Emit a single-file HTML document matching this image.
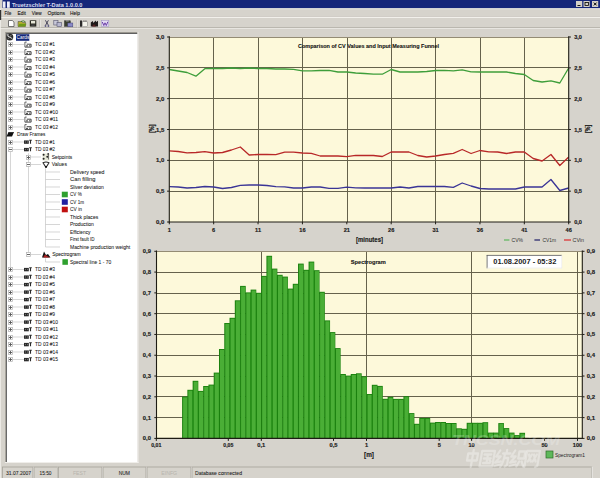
<!DOCTYPE html>
<html><head><meta charset="utf-8"><title>T-Data</title>
<style>
html,body{margin:0;padding:0;width:600px;height:478px;overflow:hidden;background:#D6D3CC;}
svg{display:block;}
text{font-family:"Liberation Sans", sans-serif;}
</style></head><body>
<svg width="600" height="478" viewBox="0 0 600 478">
<rect x="0" y="0" width="600" height="478" fill="#D6D3CC"/>

<rect x="2.5" y="0" width="597.5" height="8.3" fill="#15267A"/>
<rect x="3" y="1.5" width="2.5" height="6.3" fill="#F0F0F8"/><rect x="7" y="1.5" width="2.8" height="6.3" fill="#F0F0F8"/>
<text x="12.00" y="6.66" font-size="6" fill="#D8DCF0" textLength="70.50" lengthAdjust="spacingAndGlyphs" font-weight="bold">Truetzschler T-Data 1.0.0.0</text>
<rect x="576" y="1" width="6.2" height="6" fill="#D4D0C8"/>
<rect x="583.5" y="1" width="6.2" height="6" fill="#D4D0C8"/>
<rect x="592" y="1" width="6.2" height="6" fill="#D4D0C8"/>
<rect x="577.5" y="5" width="3" height="0.9" fill="#000"/>
<rect x="585" y="2.5" width="3.5" height="3" fill="none" stroke="#000" stroke-width="0.8"/>
<path d="M593.8 2.6 L596.6 5.4 M596.6 2.6 L593.8 5.4" stroke="#000" stroke-width="1"/>
<rect x="0" y="8.3" width="600" height="0.9" fill="#ECEAE4"/>
<text x="4.50" y="15.36" font-size="6" fill="#111" textLength="6.80" lengthAdjust="spacingAndGlyphs" stroke="#111" stroke-width="0.1">File</text>
<text x="17.50" y="15.36" font-size="6" fill="#111" textLength="8.30" lengthAdjust="spacingAndGlyphs" stroke="#111" stroke-width="0.1">Edit</text>
<text x="31.70" y="15.36" font-size="6" fill="#111" textLength="10.00" lengthAdjust="spacingAndGlyphs" stroke="#111" stroke-width="0.1">View</text>
<text x="47.50" y="15.36" font-size="6" fill="#111" textLength="17.50" lengthAdjust="spacingAndGlyphs" stroke="#111" stroke-width="0.1">Options</text>
<text x="70.00" y="15.36" font-size="6" fill="#111" textLength="10.00" lengthAdjust="spacingAndGlyphs" stroke="#111" stroke-width="0.1">Help</text>
<rect x="0" y="16.3" width="600" height="0.7" fill="#CFCBC4"/>
<rect x="0" y="17" width="600" height="1" fill="#F2F0EB"/>
<rect x="0" y="27.4" width="600" height="0.8" fill="#A8A49C"/>
<rect x="0" y="28.2" width="600" height="0.7" fill="#F4F2EE"/>
<path d="M8.5 20.5 H12.3 L14 22.2 V26.5 H8.5 Z" fill="#fff" stroke="#444" stroke-width="0.7"/>
<path d="M18 21.5 H21.5 L22.5 22.5 H25.5 V26.5 H18 Z" fill="#B8B030" stroke="#444" stroke-width="0.5"/><path d="M19.5 23.8 H26.5 L25 26.5 H18 Z" fill="#6E9A18"/><path d="M21 21.5 Q23.5 20 25.5 21.8" stroke="#2a6a10" stroke-width="0.8" fill="none"/>
<rect x="29.8" y="20.3" width="6.5" height="6.3" fill="#2a2a20"/><rect x="31" y="21" width="4.2" height="2.5" fill="#E8E8D8"/><rect x="31.3" y="24.3" width="3.5" height="1.8" fill="#444"/>
<rect x="39.5" y="19.5" width="0.6" height="8" fill="#A8A49C"/><rect x="40.1" y="19.5" width="0.6" height="8" fill="#F4F2EE"/>
<path d="M45.4 20.3 L48.4 25.2 M48.4 20.3 L45.6 25.2" stroke="#3a3850" stroke-width="0.9"/><circle cx="45.5" cy="26" r="0.9" fill="#5a5880"/><circle cx="48.4" cy="26" r="0.9" fill="#5a5880"/>
<rect x="53.8" y="20.5" width="4.2" height="4.5" fill="#c8c8d8" stroke="#555570" stroke-width="0.6"/><rect x="57" y="22.5" width="4.5" height="4" fill="#b8b8d0" stroke="#555570" stroke-width="0.6"/>
<rect x="64.5" y="20.8" width="5.8" height="5.5" fill="#3a4030" stroke="#2a2a2a" stroke-width="0.5"/><rect x="66" y="20.3" width="2.8" height="1.2" fill="#999"/><rect x="67.8" y="23" width="5" height="3.8" fill="#8a8ac8" stroke="#44447a" stroke-width="0.5"/>
<rect x="76.8" y="19.5" width="0.6" height="8" fill="#A8A49C"/><rect x="77.4" y="19.5" width="0.6" height="8" fill="#F4F2EE"/>
<rect x="80" y="20.5" width="2" height="6.2" fill="#2a2a2a"/><rect x="82.3" y="21.8" width="5" height="4.9" fill="#F4F4EC" stroke="#666" stroke-width="0.4"/><rect x="83.5" y="20.5" width="0.9" height="0.9" fill="#333"/><rect x="85.5" y="20.5" width="0.9" height="0.9" fill="#333"/>
<path d="M90.8 26.6 V22.5 L92.8 21 L93.5 23 L95.5 20.5 L96.2 22 L98 20.8 V26.6 Z" fill="#1e1a1a"/><path d="M92 26.6 L94 24 L96 26.6 Z" fill="#5a2020"/>
<rect x="101.3" y="20.3" width="7.5" height="6.4" fill="#E4DCF4" stroke="#9a90c0" stroke-width="0.5"/><path d="M102.3 22 L103.8 25.5 L105 22.8 L106.3 25.5 L107.8 21.8" stroke="#6030A0" stroke-width="0.9" fill="none"/>
<rect x="7" y="34" width="130.5" height="428" fill="#fff"/>
<rect x="6" y="33" width="131.5" height="1" fill="#606060"/>
<rect x="6" y="33" width="1" height="429" fill="#6a6a6a"/>
<rect x="5" y="32" width="132.5" height="1" fill="#9a978f"/>
<rect x="5" y="32" width="1" height="430" fill="#A8A59D"/>
<rect x="0" y="9" width="0.8" height="469" fill="#F2F0EC"/>
<rect x="0" y="10" width="1.2" height="10" fill="#333"/>
<rect x="137.5" y="32" width="1" height="431" fill="#F0EEEA"/>
<rect x="5" y="462" width="133.5" height="1" fill="#F0EEEA"/>
<circle cx="9.8" cy="37.1" r="3.5" fill="#2a2a2a"/><path d="M7.3 35.8 L12.3 38.6" stroke="#e8e8e8" stroke-width="0.9"/><path d="M8 38.8 L11.5 34.8" stroke="#aaa" stroke-width="0.7"/><circle cx="8" cy="35.0" r="0.8" fill="#ddd"/>
<rect x="16" y="34.2" width="13.3" height="6.6" fill="#14287A"/>
<text x="16.50" y="39.16" font-size="6.0" fill="#fff" textLength="12.80" lengthAdjust="spacingAndGlyphs">Cards</text>
<rect x="8.5" y="42.5" width="4" height="4" fill="#fff" stroke="#B0B0B0" stroke-width="0.7"/>
<line x1="9.0" y1="44.5" x2="12.0" y2="44.5" stroke="#555" stroke-width="0.9"/>
<line x1="10.5" y1="43.0" x2="10.5" y2="46.0" stroke="#555" stroke-width="0.9"/>
<line x1="12.5" y1="44.5" x2="24" y2="44.5" stroke="#C4C4C4" stroke-width="0.7"/>
<path d="M24.9 47.1 V42.1 H26.7" fill="none" stroke="#444" stroke-width="0.8"/>
<path d="M26.7 44.2 H31.1 V47.1 H24.9" fill="none" stroke="#333" stroke-width="0.9"/>
<rect x="26.0" y="45.3" width="2" height="1.2" fill="#555"/><rect x="29.1" y="45.0" width="1.4" height="1.6" fill="#777"/>
<text x="35.00" y="46.21" font-size="6.0" fill="#202020" textLength="20.00" lengthAdjust="spacingAndGlyphs" stroke="#202020" stroke-width="0.06">TC 03 #1</text>
<rect x="8.5" y="50.5" width="4" height="4" fill="#fff" stroke="#B0B0B0" stroke-width="0.7"/>
<line x1="9.0" y1="52.5" x2="12.0" y2="52.5" stroke="#555" stroke-width="0.9"/>
<line x1="10.5" y1="51.0" x2="10.5" y2="54.0" stroke="#555" stroke-width="0.9"/>
<line x1="12.5" y1="52.0" x2="24" y2="52.0" stroke="#C4C4C4" stroke-width="0.7"/>
<path d="M24.9 54.6 V49.6 H26.7" fill="none" stroke="#444" stroke-width="0.8"/>
<path d="M26.7 51.7 H31.1 V54.6 H24.9" fill="none" stroke="#333" stroke-width="0.9"/>
<rect x="26.0" y="52.8" width="2" height="1.2" fill="#555"/><rect x="29.1" y="52.5" width="1.4" height="1.6" fill="#777"/>
<text x="35.00" y="53.71" font-size="6.0" fill="#202020" textLength="20.00" lengthAdjust="spacingAndGlyphs" stroke="#202020" stroke-width="0.06">TC 03 #2</text>
<rect x="8.5" y="57.5" width="4" height="4" fill="#fff" stroke="#B0B0B0" stroke-width="0.7"/>
<line x1="9.0" y1="59.5" x2="12.0" y2="59.5" stroke="#555" stroke-width="0.9"/>
<line x1="10.5" y1="58.0" x2="10.5" y2="61.0" stroke="#555" stroke-width="0.9"/>
<line x1="12.5" y1="59.5" x2="24" y2="59.5" stroke="#C4C4C4" stroke-width="0.7"/>
<path d="M24.9 62.1 V57.1 H26.7" fill="none" stroke="#444" stroke-width="0.8"/>
<path d="M26.7 59.2 H31.1 V62.1 H24.9" fill="none" stroke="#333" stroke-width="0.9"/>
<rect x="26.0" y="60.3" width="2" height="1.2" fill="#555"/><rect x="29.1" y="60.0" width="1.4" height="1.6" fill="#777"/>
<text x="35.00" y="61.21" font-size="6.0" fill="#202020" textLength="20.00" lengthAdjust="spacingAndGlyphs" stroke="#202020" stroke-width="0.06">TC 03 #3</text>
<rect x="8.5" y="65.5" width="4" height="4" fill="#fff" stroke="#B0B0B0" stroke-width="0.7"/>
<line x1="9.0" y1="67.5" x2="12.0" y2="67.5" stroke="#555" stroke-width="0.9"/>
<line x1="10.5" y1="66.0" x2="10.5" y2="69.0" stroke="#555" stroke-width="0.9"/>
<line x1="12.5" y1="67.0" x2="24" y2="67.0" stroke="#C4C4C4" stroke-width="0.7"/>
<path d="M24.9 69.6 V64.6 H26.7" fill="none" stroke="#444" stroke-width="0.8"/>
<path d="M26.7 66.7 H31.1 V69.6 H24.9" fill="none" stroke="#333" stroke-width="0.9"/>
<rect x="26.0" y="67.8" width="2" height="1.2" fill="#555"/><rect x="29.1" y="67.5" width="1.4" height="1.6" fill="#777"/>
<text x="35.00" y="68.71" font-size="6.0" fill="#202020" textLength="20.00" lengthAdjust="spacingAndGlyphs" stroke="#202020" stroke-width="0.06">TC 03 #4</text>
<rect x="8.5" y="72.5" width="4" height="4" fill="#fff" stroke="#B0B0B0" stroke-width="0.7"/>
<line x1="9.0" y1="74.5" x2="12.0" y2="74.5" stroke="#555" stroke-width="0.9"/>
<line x1="10.5" y1="73.0" x2="10.5" y2="76.0" stroke="#555" stroke-width="0.9"/>
<line x1="12.5" y1="74.5" x2="24" y2="74.5" stroke="#C4C4C4" stroke-width="0.7"/>
<path d="M24.9 77.1 V72.1 H26.7" fill="none" stroke="#444" stroke-width="0.8"/>
<path d="M26.7 74.2 H31.1 V77.1 H24.9" fill="none" stroke="#333" stroke-width="0.9"/>
<rect x="26.0" y="75.3" width="2" height="1.2" fill="#555"/><rect x="29.1" y="75.0" width="1.4" height="1.6" fill="#777"/>
<text x="35.00" y="76.21" font-size="6.0" fill="#202020" textLength="20.00" lengthAdjust="spacingAndGlyphs" stroke="#202020" stroke-width="0.06">TC 03 #5</text>
<rect x="8.5" y="80.5" width="4" height="4" fill="#fff" stroke="#B0B0B0" stroke-width="0.7"/>
<line x1="9.0" y1="82.5" x2="12.0" y2="82.5" stroke="#555" stroke-width="0.9"/>
<line x1="10.5" y1="81.0" x2="10.5" y2="84.0" stroke="#555" stroke-width="0.9"/>
<line x1="12.5" y1="82.0" x2="24" y2="82.0" stroke="#C4C4C4" stroke-width="0.7"/>
<path d="M24.9 84.6 V79.6 H26.7" fill="none" stroke="#444" stroke-width="0.8"/>
<path d="M26.7 81.7 H31.1 V84.6 H24.9" fill="none" stroke="#333" stroke-width="0.9"/>
<rect x="26.0" y="82.8" width="2" height="1.2" fill="#555"/><rect x="29.1" y="82.5" width="1.4" height="1.6" fill="#777"/>
<text x="35.00" y="83.71" font-size="6.0" fill="#202020" textLength="20.00" lengthAdjust="spacingAndGlyphs" stroke="#202020" stroke-width="0.06">TC 03 #6</text>
<rect x="8.5" y="87.5" width="4" height="4" fill="#fff" stroke="#B0B0B0" stroke-width="0.7"/>
<line x1="9.0" y1="89.5" x2="12.0" y2="89.5" stroke="#555" stroke-width="0.9"/>
<line x1="10.5" y1="88.0" x2="10.5" y2="91.0" stroke="#555" stroke-width="0.9"/>
<line x1="12.5" y1="89.5" x2="24" y2="89.5" stroke="#C4C4C4" stroke-width="0.7"/>
<path d="M24.9 92.1 V87.1 H26.7" fill="none" stroke="#444" stroke-width="0.8"/>
<path d="M26.7 89.2 H31.1 V92.1 H24.9" fill="none" stroke="#333" stroke-width="0.9"/>
<rect x="26.0" y="90.3" width="2" height="1.2" fill="#555"/><rect x="29.1" y="90.0" width="1.4" height="1.6" fill="#777"/>
<text x="35.00" y="91.21" font-size="6.0" fill="#202020" textLength="20.00" lengthAdjust="spacingAndGlyphs" stroke="#202020" stroke-width="0.06">TC 03 #7</text>
<rect x="8.5" y="95.5" width="4" height="4" fill="#fff" stroke="#B0B0B0" stroke-width="0.7"/>
<line x1="9.0" y1="97.5" x2="12.0" y2="97.5" stroke="#555" stroke-width="0.9"/>
<line x1="10.5" y1="96.0" x2="10.5" y2="99.0" stroke="#555" stroke-width="0.9"/>
<line x1="12.5" y1="97.0" x2="24" y2="97.0" stroke="#C4C4C4" stroke-width="0.7"/>
<path d="M24.9 99.6 V94.6 H26.7" fill="none" stroke="#444" stroke-width="0.8"/>
<path d="M26.7 96.7 H31.1 V99.6 H24.9" fill="none" stroke="#333" stroke-width="0.9"/>
<rect x="26.0" y="97.8" width="2" height="1.2" fill="#555"/><rect x="29.1" y="97.5" width="1.4" height="1.6" fill="#777"/>
<text x="35.00" y="98.71" font-size="6.0" fill="#202020" textLength="20.00" lengthAdjust="spacingAndGlyphs" stroke="#202020" stroke-width="0.06">TC 03 #8</text>
<rect x="8.5" y="102.5" width="4" height="4" fill="#fff" stroke="#B0B0B0" stroke-width="0.7"/>
<line x1="9.0" y1="104.5" x2="12.0" y2="104.5" stroke="#555" stroke-width="0.9"/>
<line x1="10.5" y1="103.0" x2="10.5" y2="106.0" stroke="#555" stroke-width="0.9"/>
<line x1="12.5" y1="104.5" x2="24" y2="104.5" stroke="#C4C4C4" stroke-width="0.7"/>
<path d="M24.9 107.1 V102.1 H26.7" fill="none" stroke="#444" stroke-width="0.8"/>
<path d="M26.7 104.2 H31.1 V107.1 H24.9" fill="none" stroke="#333" stroke-width="0.9"/>
<rect x="26.0" y="105.3" width="2" height="1.2" fill="#555"/><rect x="29.1" y="105.0" width="1.4" height="1.6" fill="#777"/>
<text x="35.00" y="106.21" font-size="6.0" fill="#202020" textLength="20.00" lengthAdjust="spacingAndGlyphs" stroke="#202020" stroke-width="0.06">TC 03 #9</text>
<rect x="8.5" y="110.5" width="4" height="4" fill="#fff" stroke="#B0B0B0" stroke-width="0.7"/>
<line x1="9.0" y1="112.5" x2="12.0" y2="112.5" stroke="#555" stroke-width="0.9"/>
<line x1="10.5" y1="111.0" x2="10.5" y2="114.0" stroke="#555" stroke-width="0.9"/>
<line x1="12.5" y1="112.0" x2="24" y2="112.0" stroke="#C4C4C4" stroke-width="0.7"/>
<path d="M24.9 114.6 V109.6 H26.7" fill="none" stroke="#444" stroke-width="0.8"/>
<path d="M26.7 111.7 H31.1 V114.6 H24.9" fill="none" stroke="#333" stroke-width="0.9"/>
<rect x="26.0" y="112.8" width="2" height="1.2" fill="#555"/><rect x="29.1" y="112.5" width="1.4" height="1.6" fill="#777"/>
<text x="35.00" y="113.71" font-size="6.0" fill="#202020" textLength="23.00" lengthAdjust="spacingAndGlyphs" stroke="#202020" stroke-width="0.06">TC 03 #10</text>
<rect x="8.5" y="117.5" width="4" height="4" fill="#fff" stroke="#B0B0B0" stroke-width="0.7"/>
<line x1="9.0" y1="119.5" x2="12.0" y2="119.5" stroke="#555" stroke-width="0.9"/>
<line x1="10.5" y1="118.0" x2="10.5" y2="121.0" stroke="#555" stroke-width="0.9"/>
<line x1="12.5" y1="119.5" x2="24" y2="119.5" stroke="#C4C4C4" stroke-width="0.7"/>
<path d="M24.9 122.1 V117.1 H26.7" fill="none" stroke="#444" stroke-width="0.8"/>
<path d="M26.7 119.2 H31.1 V122.1 H24.9" fill="none" stroke="#333" stroke-width="0.9"/>
<rect x="26.0" y="120.3" width="2" height="1.2" fill="#555"/><rect x="29.1" y="120.0" width="1.4" height="1.6" fill="#777"/>
<text x="35.00" y="121.21" font-size="6.0" fill="#202020" textLength="23.00" lengthAdjust="spacingAndGlyphs" stroke="#202020" stroke-width="0.06">TC 03 #11</text>
<rect x="8.5" y="125.5" width="4" height="4" fill="#fff" stroke="#B0B0B0" stroke-width="0.7"/>
<line x1="9.0" y1="127.5" x2="12.0" y2="127.5" stroke="#555" stroke-width="0.9"/>
<line x1="10.5" y1="126.0" x2="10.5" y2="129.0" stroke="#555" stroke-width="0.9"/>
<line x1="12.5" y1="127.0" x2="24" y2="127.0" stroke="#C4C4C4" stroke-width="0.7"/>
<path d="M24.9 129.6 V124.6 H26.7" fill="none" stroke="#444" stroke-width="0.8"/>
<path d="M26.7 126.7 H31.1 V129.6 H24.9" fill="none" stroke="#333" stroke-width="0.9"/>
<rect x="26.0" y="127.8" width="2" height="1.2" fill="#555"/><rect x="29.1" y="127.5" width="1.4" height="1.6" fill="#777"/>
<text x="35.00" y="128.71" font-size="6.0" fill="#202020" textLength="23.00" lengthAdjust="spacingAndGlyphs" stroke="#202020" stroke-width="0.06">TC 03 #12</text>
<path d="M6.5 136.5 L8.5 132.0 H14 L12 136.5 Z" fill="#111"/><path d="M9 132.5 H13" stroke="#555" stroke-width="0.5"/>
<text x="17.00" y="136.21" font-size="6.0" fill="#202020" textLength="28.50" lengthAdjust="spacingAndGlyphs" stroke="#202020" stroke-width="0.06">Draw Frames</text>
<line x1="10.5" y1="151.75" x2="10.5" y2="267.25" stroke="#C4C4C4" stroke-width="0.7"/>
<rect x="8.5" y="140.5" width="4" height="4" fill="#fff" stroke="#B0B0B0" stroke-width="0.7"/>
<line x1="9.0" y1="142.5" x2="12.0" y2="142.5" stroke="#555" stroke-width="0.9"/>
<line x1="10.5" y1="141.0" x2="10.5" y2="144.0" stroke="#555" stroke-width="0.9"/>
<line x1="12.5" y1="142.0" x2="24" y2="142.0" stroke="#C4C4C4" stroke-width="0.7"/>
<rect x="24" y="140.4" width="4.8" height="3.4" fill="#2a2a2a"/><rect x="25.2" y="141.4" width="0.7" height="1.2" fill="#888"/><rect x="27" y="141.4" width="0.7" height="1.2" fill="#888"/>
<path d="M29.2 140.2 H31.8 M30.5 140.2 V143.8" stroke="#2a2a2a" stroke-width="1.1" fill="none"/>
<text x="35.00" y="143.71" font-size="6.0" fill="#202020" textLength="20.00" lengthAdjust="spacingAndGlyphs" stroke="#202020" stroke-width="0.06">TD 03 #1</text>
<rect x="8.5" y="147.5" width="4" height="4" fill="#fff" stroke="#B0B0B0" stroke-width="0.7"/>
<line x1="9.0" y1="149.5" x2="12.0" y2="149.5" stroke="#555" stroke-width="0.9"/>
<line x1="12.5" y1="149.5" x2="24" y2="149.5" stroke="#C4C4C4" stroke-width="0.7"/>
<rect x="24" y="147.9" width="4.8" height="3.4" fill="#2a2a2a"/><rect x="25.2" y="148.9" width="0.7" height="1.2" fill="#888"/><rect x="27" y="148.9" width="0.7" height="1.2" fill="#888"/>
<path d="M29.2 147.7 H31.8 M30.5 147.7 V151.3" stroke="#2a2a2a" stroke-width="1.1" fill="none"/>
<text x="35.00" y="151.21" font-size="6.0" fill="#202020" textLength="20.00" lengthAdjust="spacingAndGlyphs" stroke="#202020" stroke-width="0.06">TD 03 #2</text>
<line x1="28.5" y1="153.25" x2="28.5" y2="254.5" stroke="#C4C4C4" stroke-width="0.7"/>
<rect x="26.5" y="155.5" width="4" height="4" fill="#fff" stroke="#B0B0B0" stroke-width="0.7"/>
<line x1="27.0" y1="157.5" x2="30.0" y2="157.5" stroke="#555" stroke-width="0.9"/>
<line x1="28.5" y1="156.0" x2="28.5" y2="159.0" stroke="#555" stroke-width="0.9"/>
<line x1="30.5" y1="157.0" x2="41" y2="157.0" stroke="#C4C4C4" stroke-width="0.7"/>
<rect x="42.5" y="153.5" width="7" height="7" fill="#E6E8D8"/><circle cx="43.6" cy="154.8" r="1" fill="#222"/><circle cx="48.2" cy="154.0" r="0.9" fill="#333"/><circle cx="47.3" cy="156.8" r="1" fill="#222"/><circle cx="43.6" cy="158.8" r="1" fill="#222"/><rect x="48" y="154.5" width="0.8" height="5" fill="#555"/>
<text x="51.70" y="158.71" font-size="6.0" fill="#202020" textLength="20.60" lengthAdjust="spacingAndGlyphs" stroke="#202020" stroke-width="0.06">Setpoints</text>
<rect x="26.5" y="162.5" width="4" height="4" fill="#fff" stroke="#B0B0B0" stroke-width="0.7"/>
<line x1="27.0" y1="164.5" x2="30.0" y2="164.5" stroke="#555" stroke-width="0.9"/>
<line x1="30.5" y1="164.5" x2="41" y2="164.5" stroke="#C4C4C4" stroke-width="0.7"/>
<path d="M43 162.7 Q46 161.3 49 162.7 L46 167.5 Z" fill="#fff" stroke="#2a2a2a" stroke-width="1.1" stroke-linejoin="round"/><circle cx="46" cy="166.8" r="0.9" fill="#000"/>
<text x="51.70" y="166.21" font-size="6.0" fill="#202020" textLength="15.30" lengthAdjust="spacingAndGlyphs" stroke="#202020" stroke-width="0.06">Values</text>
<line x1="45.5" y1="168.25" x2="45.5" y2="247.0" stroke="#C4C4C4" stroke-width="0.7"/>
<line x1="45.5" y1="172.0" x2="60" y2="172.0" stroke="#C4C4C4" stroke-width="0.7"/>
<text x="70.00" y="173.71" font-size="6.0" fill="#202020" textLength="34.50" lengthAdjust="spacingAndGlyphs" stroke="#202020" stroke-width="0.06">Delivery speed</text>
<line x1="45.5" y1="179.5" x2="60" y2="179.5" stroke="#C4C4C4" stroke-width="0.7"/>
<text x="70.00" y="181.21" font-size="6.0" fill="#202020" textLength="25.50" lengthAdjust="spacingAndGlyphs" stroke="#202020" stroke-width="0.06">Can filling</text>
<line x1="45.5" y1="187.0" x2="60" y2="187.0" stroke="#C4C4C4" stroke-width="0.7"/>
<text x="70.00" y="188.71" font-size="6.0" fill="#202020" textLength="33.70" lengthAdjust="spacingAndGlyphs" stroke="#202020" stroke-width="0.06">Sliver deviation</text>
<line x1="45.5" y1="194.5" x2="60" y2="194.5" stroke="#C4C4C4" stroke-width="0.7"/>
<rect x="61.8" y="191.7" width="6" height="5.6" fill="#2EA02E"/>
<text x="70.00" y="196.21" font-size="6.0" fill="#202020" textLength="11.70" lengthAdjust="spacingAndGlyphs" stroke="#202020" stroke-width="0.06">CV %</text>
<line x1="45.5" y1="202.0" x2="60" y2="202.0" stroke="#C4C4C4" stroke-width="0.7"/>
<rect x="61.8" y="199.2" width="6" height="5.6" fill="#2020A0"/>
<text x="70.00" y="203.71" font-size="6.0" fill="#202020" textLength="14.00" lengthAdjust="spacingAndGlyphs" stroke="#202020" stroke-width="0.06">CV 1m</text>
<line x1="45.5" y1="209.5" x2="60" y2="209.5" stroke="#C4C4C4" stroke-width="0.7"/>
<rect x="61.8" y="206.7" width="6" height="5.6" fill="#C01010"/>
<text x="70.00" y="211.21" font-size="6.0" fill="#202020" textLength="12.00" lengthAdjust="spacingAndGlyphs" stroke="#202020" stroke-width="0.06">CV in</text>
<line x1="45.5" y1="217.0" x2="60" y2="217.0" stroke="#C4C4C4" stroke-width="0.7"/>
<text x="70.00" y="218.71" font-size="6.0" fill="#202020" textLength="28.30" lengthAdjust="spacingAndGlyphs" stroke="#202020" stroke-width="0.06">Thick places</text>
<line x1="45.5" y1="224.5" x2="60" y2="224.5" stroke="#C4C4C4" stroke-width="0.7"/>
<text x="70.00" y="226.21" font-size="6.0" fill="#202020" textLength="23.80" lengthAdjust="spacingAndGlyphs" stroke="#202020" stroke-width="0.06">Production</text>
<line x1="45.5" y1="232.0" x2="60" y2="232.0" stroke="#C4C4C4" stroke-width="0.7"/>
<text x="70.00" y="233.71" font-size="6.0" fill="#202020" textLength="20.50" lengthAdjust="spacingAndGlyphs" stroke="#202020" stroke-width="0.06">Efficiency</text>
<line x1="45.5" y1="239.5" x2="60" y2="239.5" stroke="#C4C4C4" stroke-width="0.7"/>
<text x="70.00" y="241.21" font-size="6.0" fill="#202020" textLength="24.50" lengthAdjust="spacingAndGlyphs" stroke="#202020" stroke-width="0.06">First fault ID</text>
<line x1="45.5" y1="247.0" x2="60" y2="247.0" stroke="#C4C4C4" stroke-width="0.7"/>
<text x="70.00" y="248.71" font-size="6.0" fill="#202020" textLength="60.20" lengthAdjust="spacingAndGlyphs" stroke="#202020" stroke-width="0.06">Machine production weight</text>
<rect x="26.5" y="252.5" width="4" height="4" fill="#fff" stroke="#B0B0B0" stroke-width="0.7"/>
<line x1="27.0" y1="254.5" x2="30.0" y2="254.5" stroke="#555" stroke-width="0.9"/>
<line x1="30.5" y1="254.5" x2="41" y2="254.5" stroke="#C4C4C4" stroke-width="0.7"/>
<path d="M42 257.5 L44 251.5 L46 255.0 L48 254.0 L50.5 257.5 Z" fill="#111"/><path d="M43 257.5 L45 254.5 L47 256.0 L50 257.5 Z" fill="#B02020"/>
<text x="52.20" y="256.21" font-size="6.0" fill="#202020" textLength="28.60" lengthAdjust="spacingAndGlyphs" stroke="#202020" stroke-width="0.06">Spectrogram</text>
<line x1="45.5" y1="262.0" x2="60" y2="262.0" stroke="#C4C4C4" stroke-width="0.7"/>
<line x1="45.5" y1="258.25" x2="45.5" y2="262.0" stroke="#C4C4C4" stroke-width="0.7"/>
<rect x="62.4" y="259.2" width="5.5" height="5.6" fill="#2EA02E"/>
<text x="70.00" y="263.71" font-size="6.0" fill="#202020" textLength="41.20" lengthAdjust="spacingAndGlyphs" stroke="#202020" stroke-width="0.06">Spectral line 1 - 70</text>
<rect x="8.5" y="267.5" width="4" height="4" fill="#fff" stroke="#B0B0B0" stroke-width="0.7"/>
<line x1="9.0" y1="269.5" x2="12.0" y2="269.5" stroke="#555" stroke-width="0.9"/>
<line x1="10.5" y1="268.0" x2="10.5" y2="271.0" stroke="#555" stroke-width="0.9"/>
<line x1="12.5" y1="269.5" x2="24" y2="269.5" stroke="#C4C4C4" stroke-width="0.7"/>
<rect x="24" y="267.9" width="4.8" height="3.4" fill="#2a2a2a"/><rect x="25.2" y="268.9" width="0.7" height="1.2" fill="#888"/><rect x="27" y="268.9" width="0.7" height="1.2" fill="#888"/>
<path d="M29.2 267.7 H31.8 M30.5 267.7 V271.3" stroke="#2a2a2a" stroke-width="1.1" fill="none"/>
<text x="35.00" y="271.21" font-size="6.0" fill="#202020" textLength="20.00" lengthAdjust="spacingAndGlyphs" stroke="#202020" stroke-width="0.06">TD 03 #3</text>
<rect x="8.5" y="275.5" width="4" height="4" fill="#fff" stroke="#B0B0B0" stroke-width="0.7"/>
<line x1="9.0" y1="277.5" x2="12.0" y2="277.5" stroke="#555" stroke-width="0.9"/>
<line x1="10.5" y1="276.0" x2="10.5" y2="279.0" stroke="#555" stroke-width="0.9"/>
<line x1="12.5" y1="277.0" x2="24" y2="277.0" stroke="#C4C4C4" stroke-width="0.7"/>
<rect x="24" y="275.4" width="4.8" height="3.4" fill="#2a2a2a"/><rect x="25.2" y="276.4" width="0.7" height="1.2" fill="#888"/><rect x="27" y="276.4" width="0.7" height="1.2" fill="#888"/>
<path d="M29.2 275.2 H31.8 M30.5 275.2 V278.8" stroke="#2a2a2a" stroke-width="1.1" fill="none"/>
<text x="35.00" y="278.71" font-size="6.0" fill="#202020" textLength="20.00" lengthAdjust="spacingAndGlyphs" stroke="#202020" stroke-width="0.06">TD 03 #4</text>
<rect x="8.5" y="282.5" width="4" height="4" fill="#fff" stroke="#B0B0B0" stroke-width="0.7"/>
<line x1="9.0" y1="284.5" x2="12.0" y2="284.5" stroke="#555" stroke-width="0.9"/>
<line x1="10.5" y1="283.0" x2="10.5" y2="286.0" stroke="#555" stroke-width="0.9"/>
<line x1="12.5" y1="284.5" x2="24" y2="284.5" stroke="#C4C4C4" stroke-width="0.7"/>
<rect x="24" y="282.9" width="4.8" height="3.4" fill="#2a2a2a"/><rect x="25.2" y="283.9" width="0.7" height="1.2" fill="#888"/><rect x="27" y="283.9" width="0.7" height="1.2" fill="#888"/>
<path d="M29.2 282.7 H31.8 M30.5 282.7 V286.3" stroke="#2a2a2a" stroke-width="1.1" fill="none"/>
<text x="35.00" y="286.21" font-size="6.0" fill="#202020" textLength="20.00" lengthAdjust="spacingAndGlyphs" stroke="#202020" stroke-width="0.06">TD 03 #5</text>
<rect x="8.5" y="290.5" width="4" height="4" fill="#fff" stroke="#B0B0B0" stroke-width="0.7"/>
<line x1="9.0" y1="292.5" x2="12.0" y2="292.5" stroke="#555" stroke-width="0.9"/>
<line x1="10.5" y1="291.0" x2="10.5" y2="294.0" stroke="#555" stroke-width="0.9"/>
<line x1="12.5" y1="292.0" x2="24" y2="292.0" stroke="#C4C4C4" stroke-width="0.7"/>
<rect x="24" y="290.4" width="4.8" height="3.4" fill="#2a2a2a"/><rect x="25.2" y="291.4" width="0.7" height="1.2" fill="#888"/><rect x="27" y="291.4" width="0.7" height="1.2" fill="#888"/>
<path d="M29.2 290.2 H31.8 M30.5 290.2 V293.8" stroke="#2a2a2a" stroke-width="1.1" fill="none"/>
<text x="35.00" y="293.71" font-size="6.0" fill="#202020" textLength="20.00" lengthAdjust="spacingAndGlyphs" stroke="#202020" stroke-width="0.06">TD 03 #6</text>
<rect x="8.5" y="297.5" width="4" height="4" fill="#fff" stroke="#B0B0B0" stroke-width="0.7"/>
<line x1="9.0" y1="299.5" x2="12.0" y2="299.5" stroke="#555" stroke-width="0.9"/>
<line x1="10.5" y1="298.0" x2="10.5" y2="301.0" stroke="#555" stroke-width="0.9"/>
<line x1="12.5" y1="299.5" x2="24" y2="299.5" stroke="#C4C4C4" stroke-width="0.7"/>
<rect x="24" y="297.9" width="4.8" height="3.4" fill="#2a2a2a"/><rect x="25.2" y="298.9" width="0.7" height="1.2" fill="#888"/><rect x="27" y="298.9" width="0.7" height="1.2" fill="#888"/>
<path d="M29.2 297.7 H31.8 M30.5 297.7 V301.3" stroke="#2a2a2a" stroke-width="1.1" fill="none"/>
<text x="35.00" y="301.21" font-size="6.0" fill="#202020" textLength="20.00" lengthAdjust="spacingAndGlyphs" stroke="#202020" stroke-width="0.06">TD 03 #7</text>
<rect x="8.5" y="305.5" width="4" height="4" fill="#fff" stroke="#B0B0B0" stroke-width="0.7"/>
<line x1="9.0" y1="307.5" x2="12.0" y2="307.5" stroke="#555" stroke-width="0.9"/>
<line x1="10.5" y1="306.0" x2="10.5" y2="309.0" stroke="#555" stroke-width="0.9"/>
<line x1="12.5" y1="307.0" x2="24" y2="307.0" stroke="#C4C4C4" stroke-width="0.7"/>
<rect x="24" y="305.4" width="4.8" height="3.4" fill="#2a2a2a"/><rect x="25.2" y="306.4" width="0.7" height="1.2" fill="#888"/><rect x="27" y="306.4" width="0.7" height="1.2" fill="#888"/>
<path d="M29.2 305.2 H31.8 M30.5 305.2 V308.8" stroke="#2a2a2a" stroke-width="1.1" fill="none"/>
<text x="35.00" y="308.71" font-size="6.0" fill="#202020" textLength="20.00" lengthAdjust="spacingAndGlyphs" stroke="#202020" stroke-width="0.06">TD 03 #8</text>
<rect x="8.5" y="312.5" width="4" height="4" fill="#fff" stroke="#B0B0B0" stroke-width="0.7"/>
<line x1="9.0" y1="314.5" x2="12.0" y2="314.5" stroke="#555" stroke-width="0.9"/>
<line x1="10.5" y1="313.0" x2="10.5" y2="316.0" stroke="#555" stroke-width="0.9"/>
<line x1="12.5" y1="314.5" x2="24" y2="314.5" stroke="#C4C4C4" stroke-width="0.7"/>
<rect x="24" y="312.9" width="4.8" height="3.4" fill="#2a2a2a"/><rect x="25.2" y="313.9" width="0.7" height="1.2" fill="#888"/><rect x="27" y="313.9" width="0.7" height="1.2" fill="#888"/>
<path d="M29.2 312.7 H31.8 M30.5 312.7 V316.3" stroke="#2a2a2a" stroke-width="1.1" fill="none"/>
<text x="35.00" y="316.21" font-size="6.0" fill="#202020" textLength="20.00" lengthAdjust="spacingAndGlyphs" stroke="#202020" stroke-width="0.06">TD 03 #9</text>
<rect x="8.5" y="320.5" width="4" height="4" fill="#fff" stroke="#B0B0B0" stroke-width="0.7"/>
<line x1="9.0" y1="322.5" x2="12.0" y2="322.5" stroke="#555" stroke-width="0.9"/>
<line x1="10.5" y1="321.0" x2="10.5" y2="324.0" stroke="#555" stroke-width="0.9"/>
<line x1="12.5" y1="322.0" x2="24" y2="322.0" stroke="#C4C4C4" stroke-width="0.7"/>
<rect x="24" y="320.4" width="4.8" height="3.4" fill="#2a2a2a"/><rect x="25.2" y="321.4" width="0.7" height="1.2" fill="#888"/><rect x="27" y="321.4" width="0.7" height="1.2" fill="#888"/>
<path d="M29.2 320.2 H31.8 M30.5 320.2 V323.8" stroke="#2a2a2a" stroke-width="1.1" fill="none"/>
<text x="35.00" y="323.71" font-size="6.0" fill="#202020" textLength="23.00" lengthAdjust="spacingAndGlyphs" stroke="#202020" stroke-width="0.06">TD 03 #10</text>
<rect x="8.5" y="327.5" width="4" height="4" fill="#fff" stroke="#B0B0B0" stroke-width="0.7"/>
<line x1="9.0" y1="329.5" x2="12.0" y2="329.5" stroke="#555" stroke-width="0.9"/>
<line x1="10.5" y1="328.0" x2="10.5" y2="331.0" stroke="#555" stroke-width="0.9"/>
<line x1="12.5" y1="329.5" x2="24" y2="329.5" stroke="#C4C4C4" stroke-width="0.7"/>
<rect x="24" y="327.9" width="4.8" height="3.4" fill="#2a2a2a"/><rect x="25.2" y="328.9" width="0.7" height="1.2" fill="#888"/><rect x="27" y="328.9" width="0.7" height="1.2" fill="#888"/>
<path d="M29.2 327.7 H31.8 M30.5 327.7 V331.3" stroke="#2a2a2a" stroke-width="1.1" fill="none"/>
<text x="35.00" y="331.21" font-size="6.0" fill="#202020" textLength="23.00" lengthAdjust="spacingAndGlyphs" stroke="#202020" stroke-width="0.06">TD 03 #11</text>
<rect x="8.5" y="335.5" width="4" height="4" fill="#fff" stroke="#B0B0B0" stroke-width="0.7"/>
<line x1="9.0" y1="337.5" x2="12.0" y2="337.5" stroke="#555" stroke-width="0.9"/>
<line x1="10.5" y1="336.0" x2="10.5" y2="339.0" stroke="#555" stroke-width="0.9"/>
<line x1="12.5" y1="337.0" x2="24" y2="337.0" stroke="#C4C4C4" stroke-width="0.7"/>
<rect x="24" y="335.4" width="4.8" height="3.4" fill="#2a2a2a"/><rect x="25.2" y="336.4" width="0.7" height="1.2" fill="#888"/><rect x="27" y="336.4" width="0.7" height="1.2" fill="#888"/>
<path d="M29.2 335.2 H31.8 M30.5 335.2 V338.8" stroke="#2a2a2a" stroke-width="1.1" fill="none"/>
<text x="35.00" y="338.71" font-size="6.0" fill="#202020" textLength="23.00" lengthAdjust="spacingAndGlyphs" stroke="#202020" stroke-width="0.06">TD 03 #12</text>
<rect x="8.5" y="342.5" width="4" height="4" fill="#fff" stroke="#B0B0B0" stroke-width="0.7"/>
<line x1="9.0" y1="344.5" x2="12.0" y2="344.5" stroke="#555" stroke-width="0.9"/>
<line x1="10.5" y1="343.0" x2="10.5" y2="346.0" stroke="#555" stroke-width="0.9"/>
<line x1="12.5" y1="344.5" x2="24" y2="344.5" stroke="#C4C4C4" stroke-width="0.7"/>
<rect x="24" y="342.9" width="4.8" height="3.4" fill="#2a2a2a"/><rect x="25.2" y="343.9" width="0.7" height="1.2" fill="#888"/><rect x="27" y="343.9" width="0.7" height="1.2" fill="#888"/>
<path d="M29.2 342.7 H31.8 M30.5 342.7 V346.3" stroke="#2a2a2a" stroke-width="1.1" fill="none"/>
<text x="35.00" y="346.21" font-size="6.0" fill="#202020" textLength="23.00" lengthAdjust="spacingAndGlyphs" stroke="#202020" stroke-width="0.06">TD 03 #13</text>
<rect x="8.5" y="350.5" width="4" height="4" fill="#fff" stroke="#B0B0B0" stroke-width="0.7"/>
<line x1="9.0" y1="352.5" x2="12.0" y2="352.5" stroke="#555" stroke-width="0.9"/>
<line x1="10.5" y1="351.0" x2="10.5" y2="354.0" stroke="#555" stroke-width="0.9"/>
<line x1="12.5" y1="352.0" x2="24" y2="352.0" stroke="#C4C4C4" stroke-width="0.7"/>
<rect x="24" y="350.4" width="4.8" height="3.4" fill="#2a2a2a"/><rect x="25.2" y="351.4" width="0.7" height="1.2" fill="#888"/><rect x="27" y="351.4" width="0.7" height="1.2" fill="#888"/>
<path d="M29.2 350.2 H31.8 M30.5 350.2 V353.8" stroke="#2a2a2a" stroke-width="1.1" fill="none"/>
<text x="35.00" y="353.71" font-size="6.0" fill="#202020" textLength="23.00" lengthAdjust="spacingAndGlyphs" stroke="#202020" stroke-width="0.06">TD 03 #14</text>
<rect x="8.5" y="357.5" width="4" height="4" fill="#fff" stroke="#B0B0B0" stroke-width="0.7"/>
<line x1="9.0" y1="359.5" x2="12.0" y2="359.5" stroke="#555" stroke-width="0.9"/>
<line x1="10.5" y1="358.0" x2="10.5" y2="361.0" stroke="#555" stroke-width="0.9"/>
<line x1="12.5" y1="359.5" x2="24" y2="359.5" stroke="#C4C4C4" stroke-width="0.7"/>
<rect x="24" y="357.9" width="4.8" height="3.4" fill="#2a2a2a"/><rect x="25.2" y="358.9" width="0.7" height="1.2" fill="#888"/><rect x="27" y="358.9" width="0.7" height="1.2" fill="#888"/>
<path d="M29.2 357.7 H31.8 M30.5 357.7 V361.3" stroke="#2a2a2a" stroke-width="1.1" fill="none"/>
<text x="35.00" y="361.21" font-size="6.0" fill="#202020" textLength="23.00" lengthAdjust="spacingAndGlyphs" stroke="#202020" stroke-width="0.06">TD 03 #15</text>
<rect x="2.5" y="467" width="30.5" height="13" fill="none" stroke="#A6A29A" stroke-width="0.8"/>
<line x1="33.6" y1="467" x2="33.6" y2="478" stroke="#fff" stroke-width="0.6"/>
<rect x="34" y="467" width="23.5" height="13" fill="none" stroke="#A6A29A" stroke-width="0.8"/>
<line x1="58.1" y1="467" x2="58.1" y2="478" stroke="#fff" stroke-width="0.6"/>
<rect x="58.5" y="467" width="43.5" height="13" fill="none" stroke="#A6A29A" stroke-width="0.8"/>
<line x1="102.6" y1="467" x2="102.6" y2="478" stroke="#fff" stroke-width="0.6"/>
<rect x="103" y="467" width="43" height="13" fill="none" stroke="#A6A29A" stroke-width="0.8"/>
<line x1="146.6" y1="467" x2="146.6" y2="478" stroke="#fff" stroke-width="0.6"/>
<rect x="147" y="467" width="44" height="13" fill="none" stroke="#A6A29A" stroke-width="0.8"/>
<line x1="191.6" y1="467" x2="191.6" y2="478" stroke="#fff" stroke-width="0.6"/>
<rect x="192" y="467" width="399.5" height="13" fill="none" stroke="#A6A29A" stroke-width="0.8"/>
<line x1="592.1" y1="467" x2="592.1" y2="478" stroke="#fff" stroke-width="0.6"/>
<text x="6.00" y="474.91" font-size="5.3" fill="#1a1a1a" textLength="25.00" lengthAdjust="spacingAndGlyphs" stroke="#1a1a1a" stroke-width="0.06">31.07.2007</text>
<text x="39.50" y="474.91" font-size="5.3" fill="#1a1a1a" textLength="12.00" lengthAdjust="spacingAndGlyphs" stroke="#1a1a1a" stroke-width="0.06">15:50</text>
<text x="73.00" y="474.91" font-size="5.3" fill="#B6B3AC" textLength="13.00" lengthAdjust="spacingAndGlyphs">FEST</text>
<text x="118.70" y="474.91" font-size="5.3" fill="#1a1a1a" textLength="11.30" lengthAdjust="spacingAndGlyphs" stroke="#1a1a1a" stroke-width="0.06">NUM</text>
<text x="161.20" y="474.91" font-size="5.3" fill="#B6B3AC" textLength="16.00" lengthAdjust="spacingAndGlyphs">EINFG</text>
<text x="195.00" y="474.91" font-size="5.3" fill="#1a1a1a" textLength="47.00" lengthAdjust="spacingAndGlyphs" stroke="#1a1a1a" stroke-width="0.06">Database connected</text>
<rect x="169.3" y="37" width="399.40000000000003" height="185" fill="#FDF9DA"/>
<line x1="213.5" y1="37" x2="213.5" y2="222" stroke="#66624C" stroke-width="1"/>
<line x1="258.5" y1="37" x2="258.5" y2="222" stroke="#66624C" stroke-width="1"/>
<line x1="302.5" y1="37" x2="302.5" y2="222" stroke="#66624C" stroke-width="1"/>
<line x1="347.5" y1="37" x2="347.5" y2="222" stroke="#66624C" stroke-width="1"/>
<line x1="391.5" y1="37" x2="391.5" y2="222" stroke="#66624C" stroke-width="1"/>
<line x1="435.5" y1="37" x2="435.5" y2="222" stroke="#66624C" stroke-width="1"/>
<line x1="480.5" y1="37" x2="480.5" y2="222" stroke="#66624C" stroke-width="1"/>
<line x1="524.5" y1="37" x2="524.5" y2="222" stroke="#66624C" stroke-width="1"/>
<line x1="169.3" y1="37.5" x2="568.7" y2="37.5" stroke="#948C74" stroke-width="1"/>
<line x1="169.3" y1="67.5" x2="568.7" y2="67.5" stroke="#66624C" stroke-width="1"/>
<line x1="169.3" y1="98.5" x2="568.7" y2="98.5" stroke="#66624C" stroke-width="1"/>
<line x1="169.3" y1="129.5" x2="568.7" y2="129.5" stroke="#66624C" stroke-width="1"/>
<line x1="169.3" y1="160.5" x2="568.7" y2="160.5" stroke="#66624C" stroke-width="1"/>
<line x1="169.3" y1="191.5" x2="568.7" y2="191.5" stroke="#66624C" stroke-width="1"/>
<text x="298.00" y="48.49" font-size="5.8" fill="#111" textLength="141.00" lengthAdjust="spacingAndGlyphs" font-weight="bold" stroke="#111" stroke-width="0.1">Comparison of CV Values and Input Measuring Funnel</text>
<polyline points="169.30,69.50 178.18,71.00 187.05,72.50 195.93,76.20 204.80,68.70 213.68,68.50 222.55,68.50 231.43,68.00 240.30,68.50 249.18,68.00 258.06,68.50 266.93,68.50 275.81,69.00 284.68,69.00 293.56,69.30 302.43,70.80 311.31,70.80 320.18,70.50 329.06,70.30 337.94,72.00 346.81,72.00 355.69,73.00 364.56,73.50 373.44,74.20 382.31,74.20 391.19,69.50 400.06,72.00 408.94,72.00 417.82,72.00 426.69,71.50 435.57,70.50 444.44,70.30 453.32,70.80 462.19,69.80 471.07,71.80 479.94,72.00 488.82,72.00 497.70,72.00 506.57,72.00 515.45,73.50 524.32,74.50 533.20,80.50 542.07,82.00 550.95,80.80 559.82,83.00 568.70,68.00" fill="none" stroke="#3E9E3A" stroke-width="1.3" stroke-linejoin="round"/>
<polyline points="169.30,150.80 178.18,151.50 187.05,152.80 195.93,152.50 204.80,151.70 213.68,153.00 222.55,152.50 231.43,150.00 240.30,147.00 249.18,155.00 258.06,154.50 266.93,154.30 275.81,154.70 284.68,152.20 293.56,152.20 302.43,153.00 311.31,153.30 320.18,156.00 329.06,156.00 337.94,156.00 346.81,156.70 355.69,155.30 364.56,155.50 373.44,155.50 382.31,156.50 391.19,152.00 400.06,152.00 408.94,152.00 417.82,155.50 426.69,157.00 435.57,156.00 444.44,154.50 453.32,153.30 462.19,149.50 471.07,153.50 479.94,150.50 488.82,151.80 497.70,152.00 506.57,153.50 515.45,152.00 524.32,152.00 533.20,158.50 542.07,161.00 550.95,154.50 559.82,165.50 568.70,157.00" fill="none" stroke="#B82828" stroke-width="1.3" stroke-linejoin="round"/>
<polyline points="169.30,186.70 178.18,187.00 187.05,188.00 195.93,187.50 204.80,186.50 213.68,187.00 222.55,188.50 231.43,187.50 240.30,185.30 249.18,185.00 258.06,185.00 266.93,185.50 275.81,186.70 284.68,186.80 293.56,188.00 302.43,188.00 311.31,187.00 320.18,187.00 329.06,188.30 337.94,188.30 346.81,187.20 355.69,187.80 364.56,188.00 373.44,188.00 382.31,188.00 391.19,188.00 400.06,187.00 408.94,188.00 417.82,186.50 426.69,186.50 435.57,186.50 444.44,186.50 453.32,187.30 462.19,183.00 471.07,186.00 479.94,188.50 488.82,189.00 497.70,189.00 506.57,189.00 515.45,189.00 524.32,187.00 533.20,187.00 542.07,187.00 550.95,179.50 559.82,190.50 568.70,188.00" fill="none" stroke="#3A3596" stroke-width="1.3" stroke-linejoin="round"/>
<line x1="169.3" y1="36.2" x2="169.3" y2="222.5" stroke="#1E1C14" stroke-width="1.1"/>
<line x1="168.8" y1="222" x2="569.2" y2="222" stroke="#1E1C14" stroke-width="1.1"/>
<line x1="568.7" y1="36.2" x2="568.7" y2="222.5" stroke="#1E1C14" stroke-width="1.1"/>
<line x1="167.10000000000002" y1="37.00" x2="169.3" y2="37.00" stroke="#1E1C14" stroke-width="1"/>
<line x1="568.7" y1="37.00" x2="570.9000000000001" y2="37.00" stroke="#1E1C14" stroke-width="1"/>
<text x="164.30" y="39.02" font-size="5.6" fill="#1a1a1a" textLength="8.30" lengthAdjust="spacingAndGlyphs" font-weight="bold" text-anchor="end" stroke="#1a1a1a" stroke-width="0.15">3,0</text>
<text x="574.20" y="39.02" font-size="5.6" fill="#1a1a1a" textLength="7.80" lengthAdjust="spacingAndGlyphs" font-weight="bold" stroke="#1a1a1a" stroke-width="0.15">3,0</text>
<line x1="167.10000000000002" y1="67.83" x2="169.3" y2="67.83" stroke="#1E1C14" stroke-width="1"/>
<line x1="568.7" y1="67.83" x2="570.9000000000001" y2="67.83" stroke="#1E1C14" stroke-width="1"/>
<text x="164.30" y="69.85" font-size="5.6" fill="#1a1a1a" textLength="8.30" lengthAdjust="spacingAndGlyphs" font-weight="bold" text-anchor="end" stroke="#1a1a1a" stroke-width="0.15">2,5</text>
<text x="574.20" y="69.85" font-size="5.6" fill="#1a1a1a" textLength="7.80" lengthAdjust="spacingAndGlyphs" font-weight="bold" stroke="#1a1a1a" stroke-width="0.15">2,5</text>
<line x1="167.10000000000002" y1="98.67" x2="169.3" y2="98.67" stroke="#1E1C14" stroke-width="1"/>
<line x1="568.7" y1="98.67" x2="570.9000000000001" y2="98.67" stroke="#1E1C14" stroke-width="1"/>
<text x="164.30" y="100.68" font-size="5.6" fill="#1a1a1a" textLength="8.30" lengthAdjust="spacingAndGlyphs" font-weight="bold" text-anchor="end" stroke="#1a1a1a" stroke-width="0.15">2,0</text>
<text x="574.20" y="100.68" font-size="5.6" fill="#1a1a1a" textLength="7.80" lengthAdjust="spacingAndGlyphs" font-weight="bold" stroke="#1a1a1a" stroke-width="0.15">2,0</text>
<line x1="167.10000000000002" y1="129.50" x2="169.3" y2="129.50" stroke="#1E1C14" stroke-width="1"/>
<line x1="568.7" y1="129.50" x2="570.9000000000001" y2="129.50" stroke="#1E1C14" stroke-width="1"/>
<text x="164.30" y="131.52" font-size="5.6" fill="#1a1a1a" textLength="8.30" lengthAdjust="spacingAndGlyphs" font-weight="bold" text-anchor="end" stroke="#1a1a1a" stroke-width="0.15">1,5</text>
<text x="574.20" y="131.52" font-size="5.6" fill="#1a1a1a" textLength="7.80" lengthAdjust="spacingAndGlyphs" font-weight="bold" stroke="#1a1a1a" stroke-width="0.15">1,5</text>
<line x1="167.10000000000002" y1="160.33" x2="169.3" y2="160.33" stroke="#1E1C14" stroke-width="1"/>
<line x1="568.7" y1="160.33" x2="570.9000000000001" y2="160.33" stroke="#1E1C14" stroke-width="1"/>
<text x="164.30" y="162.35" font-size="5.6" fill="#1a1a1a" textLength="8.30" lengthAdjust="spacingAndGlyphs" font-weight="bold" text-anchor="end" stroke="#1a1a1a" stroke-width="0.15">1,0</text>
<text x="574.20" y="162.35" font-size="5.6" fill="#1a1a1a" textLength="7.80" lengthAdjust="spacingAndGlyphs" font-weight="bold" stroke="#1a1a1a" stroke-width="0.15">1,0</text>
<line x1="167.10000000000002" y1="191.17" x2="169.3" y2="191.17" stroke="#1E1C14" stroke-width="1"/>
<line x1="568.7" y1="191.17" x2="570.9000000000001" y2="191.17" stroke="#1E1C14" stroke-width="1"/>
<text x="164.30" y="193.18" font-size="5.6" fill="#1a1a1a" textLength="8.30" lengthAdjust="spacingAndGlyphs" font-weight="bold" text-anchor="end" stroke="#1a1a1a" stroke-width="0.15">0,5</text>
<text x="574.20" y="193.18" font-size="5.6" fill="#1a1a1a" textLength="7.80" lengthAdjust="spacingAndGlyphs" font-weight="bold" stroke="#1a1a1a" stroke-width="0.15">0,5</text>
<line x1="167.10000000000002" y1="222.00" x2="169.3" y2="222.00" stroke="#1E1C14" stroke-width="1"/>
<line x1="568.7" y1="222.00" x2="570.9000000000001" y2="222.00" stroke="#1E1C14" stroke-width="1"/>
<text x="164.30" y="224.02" font-size="5.6" fill="#1a1a1a" textLength="8.30" lengthAdjust="spacingAndGlyphs" font-weight="bold" text-anchor="end" stroke="#1a1a1a" stroke-width="0.15">0,0</text>
<text x="574.20" y="224.02" font-size="5.6" fill="#1a1a1a" textLength="7.80" lengthAdjust="spacingAndGlyphs" font-weight="bold" stroke="#1a1a1a" stroke-width="0.15">0,0</text>
<line x1="169.30" y1="222" x2="169.30" y2="224.3" stroke="#1E1C14" stroke-width="1"/>
<text x="169.30" y="231.82" font-size="5.6" fill="#1a1a1a" font-weight="bold" text-anchor="middle" stroke="#1a1a1a" stroke-width="0.15">1</text>
<line x1="213.68" y1="222" x2="213.68" y2="224.3" stroke="#1E1C14" stroke-width="1"/>
<text x="213.68" y="231.82" font-size="5.6" fill="#1a1a1a" font-weight="bold" text-anchor="middle" stroke="#1a1a1a" stroke-width="0.15">6</text>
<line x1="258.06" y1="222" x2="258.06" y2="224.3" stroke="#1E1C14" stroke-width="1"/>
<text x="258.06" y="231.82" font-size="5.6" fill="#1a1a1a" font-weight="bold" text-anchor="middle" stroke="#1a1a1a" stroke-width="0.15">11</text>
<line x1="302.43" y1="222" x2="302.43" y2="224.3" stroke="#1E1C14" stroke-width="1"/>
<text x="302.43" y="231.82" font-size="5.6" fill="#1a1a1a" font-weight="bold" text-anchor="middle" stroke="#1a1a1a" stroke-width="0.15">16</text>
<line x1="346.81" y1="222" x2="346.81" y2="224.3" stroke="#1E1C14" stroke-width="1"/>
<text x="346.81" y="231.82" font-size="5.6" fill="#1a1a1a" font-weight="bold" text-anchor="middle" stroke="#1a1a1a" stroke-width="0.15">21</text>
<line x1="391.19" y1="222" x2="391.19" y2="224.3" stroke="#1E1C14" stroke-width="1"/>
<text x="391.19" y="231.82" font-size="5.6" fill="#1a1a1a" font-weight="bold" text-anchor="middle" stroke="#1a1a1a" stroke-width="0.15">26</text>
<line x1="435.57" y1="222" x2="435.57" y2="224.3" stroke="#1E1C14" stroke-width="1"/>
<text x="435.57" y="231.82" font-size="5.6" fill="#1a1a1a" font-weight="bold" text-anchor="middle" stroke="#1a1a1a" stroke-width="0.15">31</text>
<line x1="479.94" y1="222" x2="479.94" y2="224.3" stroke="#1E1C14" stroke-width="1"/>
<text x="479.94" y="231.82" font-size="5.6" fill="#1a1a1a" font-weight="bold" text-anchor="middle" stroke="#1a1a1a" stroke-width="0.15">36</text>
<line x1="524.32" y1="222" x2="524.32" y2="224.3" stroke="#1E1C14" stroke-width="1"/>
<text x="524.32" y="231.82" font-size="5.6" fill="#1a1a1a" font-weight="bold" text-anchor="middle" stroke="#1a1a1a" stroke-width="0.15">41</text>
<line x1="568.70" y1="222" x2="568.70" y2="224.3" stroke="#1E1C14" stroke-width="1"/>
<text x="568.70" y="231.82" font-size="5.6" fill="#1a1a1a" font-weight="bold" text-anchor="middle" stroke="#1a1a1a" stroke-width="0.15">46</text>
<text x="356.00" y="242.30" font-size="6.4" fill="#1a1a1a" textLength="27.00" lengthAdjust="spacingAndGlyphs" font-weight="bold" stroke="#1a1a1a" stroke-width="0.15">[minutes]</text>
<text transform="translate(153.6,128.7) rotate(-90)" font-size="6.4" font-weight="bold" fill="#1a1a1a" text-anchor="middle" stroke="#1a1a1a" stroke-width="0.25" textLength="8.2" lengthAdjust="spacingAndGlyphs">[%]</text>
<text transform="translate(590.2,128.9) rotate(-90)" font-size="6.4" font-weight="bold" fill="#1a1a1a" text-anchor="middle" stroke="#1a1a1a" stroke-width="0.25" textLength="8.2" lengthAdjust="spacingAndGlyphs">[%]</text>
<line x1="504" y1="240" x2="509.5" y2="240" stroke="#5CB85C" stroke-width="1.2"/>
<text x="511.60" y="241.91" font-size="5.3" fill="#333" textLength="11.40" lengthAdjust="spacingAndGlyphs">CV%</text>
<line x1="534.4" y1="240" x2="540" y2="240" stroke="#1E1E66" stroke-width="1.2"/>
<text x="542.40" y="241.91" font-size="5.3" fill="#333" textLength="13.60" lengthAdjust="spacingAndGlyphs">CV1m</text>
<line x1="564" y1="240" x2="571" y2="240" stroke="#DD2A2A" stroke-width="1.2"/>
<text x="572.60" y="241.91" font-size="5.3" fill="#333" textLength="11.40" lengthAdjust="spacingAndGlyphs">CVin</text>
<rect x="156.5" y="251.3" width="425.79999999999995" height="187.09999999999997" fill="#FDF9DA"/>
<line x1="261.5" y1="251.3" x2="261.5" y2="438.4" stroke="#66624C" stroke-width="1"/>
<line x1="366.5" y1="251.3" x2="366.5" y2="438.4" stroke="#66624C" stroke-width="1"/>
<line x1="471.5" y1="251.3" x2="471.5" y2="438.4" stroke="#66624C" stroke-width="1"/>
<line x1="577.5" y1="251.3" x2="577.5" y2="438.4" stroke="#66624C" stroke-width="1"/>
<line x1="156.5" y1="251.5" x2="582.3" y2="251.5" stroke="#948C74" stroke-width="1"/>
<line x1="156.5" y1="272.5" x2="582.3" y2="272.5" stroke="#66624C" stroke-width="1"/>
<line x1="156.5" y1="293.5" x2="582.3" y2="293.5" stroke="#66624C" stroke-width="1"/>
<line x1="156.5" y1="313.5" x2="582.3" y2="313.5" stroke="#66624C" stroke-width="1"/>
<line x1="156.5" y1="334.5" x2="582.3" y2="334.5" stroke="#66624C" stroke-width="1"/>
<line x1="156.5" y1="355.5" x2="582.3" y2="355.5" stroke="#66624C" stroke-width="1"/>
<line x1="156.5" y1="376.5" x2="582.3" y2="376.5" stroke="#66624C" stroke-width="1"/>
<line x1="156.5" y1="396.5" x2="582.3" y2="396.5" stroke="#66624C" stroke-width="1"/>
<line x1="156.5" y1="417.5" x2="582.3" y2="417.5" stroke="#66624C" stroke-width="1"/>
<rect x="182.10" y="396.50" width="5.67" height="41.90" fill="#1A800E"/>
<rect x="183.10" y="397.40" width="4.17" height="41.00" fill="#4AAE36"/>
<rect x="187.37" y="389.80" width="5.67" height="48.60" fill="#1A800E"/>
<rect x="188.37" y="390.70" width="4.17" height="47.70" fill="#4AAE36"/>
<rect x="192.64" y="380.80" width="5.67" height="57.60" fill="#1A800E"/>
<rect x="193.64" y="381.70" width="4.17" height="56.70" fill="#4AAE36"/>
<rect x="197.91" y="390.90" width="5.67" height="47.50" fill="#1A800E"/>
<rect x="198.91" y="391.80" width="4.17" height="46.60" fill="#4AAE36"/>
<rect x="203.18" y="386.00" width="5.67" height="52.40" fill="#1A800E"/>
<rect x="204.18" y="386.90" width="4.17" height="51.50" fill="#4AAE36"/>
<rect x="208.45" y="384.60" width="5.67" height="53.80" fill="#1A800E"/>
<rect x="209.45" y="385.50" width="4.17" height="52.90" fill="#4AAE36"/>
<rect x="213.72" y="372.60" width="5.67" height="65.80" fill="#1A800E"/>
<rect x="214.72" y="373.50" width="4.17" height="64.90" fill="#4AAE36"/>
<rect x="218.99" y="349.00" width="5.67" height="89.40" fill="#1A800E"/>
<rect x="219.99" y="349.90" width="4.17" height="88.50" fill="#4AAE36"/>
<rect x="224.26" y="323.00" width="5.67" height="115.40" fill="#1A800E"/>
<rect x="225.26" y="323.90" width="4.17" height="114.50" fill="#4AAE36"/>
<rect x="229.53" y="317.80" width="5.67" height="120.60" fill="#1A800E"/>
<rect x="230.53" y="318.70" width="4.17" height="119.70" fill="#4AAE36"/>
<rect x="234.80" y="300.30" width="5.67" height="138.10" fill="#1A800E"/>
<rect x="235.80" y="301.20" width="4.17" height="137.20" fill="#4AAE36"/>
<rect x="240.07" y="285.90" width="5.67" height="152.50" fill="#1A800E"/>
<rect x="241.07" y="286.80" width="4.17" height="151.60" fill="#4AAE36"/>
<rect x="245.34" y="292.40" width="5.67" height="146.00" fill="#1A800E"/>
<rect x="246.34" y="293.30" width="4.17" height="145.10" fill="#4AAE36"/>
<rect x="250.61" y="289.60" width="5.67" height="148.80" fill="#1A800E"/>
<rect x="251.61" y="290.50" width="4.17" height="147.90" fill="#4AAE36"/>
<rect x="255.88" y="292.80" width="5.67" height="145.60" fill="#1A800E"/>
<rect x="256.88" y="293.70" width="4.17" height="144.70" fill="#4AAE36"/>
<rect x="261.15" y="275.90" width="5.67" height="162.50" fill="#1A800E"/>
<rect x="262.15" y="276.80" width="4.17" height="161.60" fill="#4AAE36"/>
<rect x="266.42" y="255.80" width="5.67" height="182.60" fill="#1A800E"/>
<rect x="267.42" y="256.70" width="4.17" height="181.70" fill="#4AAE36"/>
<rect x="271.69" y="268.60" width="5.67" height="169.80" fill="#1A800E"/>
<rect x="272.69" y="269.50" width="4.17" height="168.90" fill="#4AAE36"/>
<rect x="276.96" y="274.80" width="5.67" height="163.60" fill="#1A800E"/>
<rect x="277.96" y="275.70" width="4.17" height="162.70" fill="#4AAE36"/>
<rect x="282.23" y="276.60" width="5.67" height="161.80" fill="#1A800E"/>
<rect x="283.23" y="277.50" width="4.17" height="160.90" fill="#4AAE36"/>
<rect x="287.50" y="288.60" width="5.67" height="149.80" fill="#1A800E"/>
<rect x="288.50" y="289.50" width="4.17" height="148.90" fill="#4AAE36"/>
<rect x="292.77" y="283.80" width="5.67" height="154.60" fill="#1A800E"/>
<rect x="293.77" y="284.70" width="4.17" height="153.70" fill="#4AAE36"/>
<rect x="298.04" y="263.60" width="5.67" height="174.80" fill="#1A800E"/>
<rect x="299.04" y="264.50" width="4.17" height="173.90" fill="#4AAE36"/>
<rect x="303.31" y="269.80" width="5.67" height="168.60" fill="#1A800E"/>
<rect x="304.31" y="270.70" width="4.17" height="167.70" fill="#4AAE36"/>
<rect x="308.58" y="261.60" width="5.67" height="176.80" fill="#1A800E"/>
<rect x="309.58" y="262.50" width="4.17" height="175.90" fill="#4AAE36"/>
<rect x="313.85" y="270.20" width="5.67" height="168.20" fill="#1A800E"/>
<rect x="314.85" y="271.10" width="4.17" height="167.30" fill="#4AAE36"/>
<rect x="319.12" y="291.80" width="5.67" height="146.60" fill="#1A800E"/>
<rect x="320.12" y="292.70" width="4.17" height="145.70" fill="#4AAE36"/>
<rect x="324.39" y="320.40" width="5.67" height="118.00" fill="#1A800E"/>
<rect x="325.39" y="321.30" width="4.17" height="117.10" fill="#4AAE36"/>
<rect x="329.66" y="332.10" width="5.67" height="106.30" fill="#1A800E"/>
<rect x="330.66" y="333.00" width="4.17" height="105.40" fill="#4AAE36"/>
<rect x="334.93" y="348.10" width="5.67" height="90.30" fill="#1A800E"/>
<rect x="335.93" y="349.00" width="4.17" height="89.40" fill="#4AAE36"/>
<rect x="340.20" y="374.00" width="5.67" height="64.40" fill="#1A800E"/>
<rect x="341.20" y="374.90" width="4.17" height="63.50" fill="#4AAE36"/>
<rect x="345.47" y="375.60" width="5.67" height="62.80" fill="#1A800E"/>
<rect x="346.47" y="376.50" width="4.17" height="61.90" fill="#4AAE36"/>
<rect x="350.74" y="374.00" width="5.67" height="64.40" fill="#1A800E"/>
<rect x="351.74" y="374.90" width="4.17" height="63.50" fill="#4AAE36"/>
<rect x="356.01" y="373.30" width="5.67" height="65.10" fill="#1A800E"/>
<rect x="357.01" y="374.20" width="4.17" height="64.20" fill="#4AAE36"/>
<rect x="361.28" y="376.30" width="5.67" height="62.10" fill="#1A800E"/>
<rect x="362.28" y="377.20" width="4.17" height="61.20" fill="#4AAE36"/>
<rect x="366.55" y="394.00" width="5.67" height="44.40" fill="#1A800E"/>
<rect x="367.55" y="394.90" width="4.17" height="43.50" fill="#4AAE36"/>
<rect x="371.82" y="384.80" width="5.67" height="53.60" fill="#1A800E"/>
<rect x="372.82" y="385.70" width="4.17" height="52.70" fill="#4AAE36"/>
<rect x="377.09" y="385.90" width="5.67" height="52.50" fill="#1A800E"/>
<rect x="378.09" y="386.80" width="4.17" height="51.60" fill="#4AAE36"/>
<rect x="382.36" y="398.80" width="5.67" height="39.60" fill="#1A800E"/>
<rect x="383.36" y="399.70" width="4.17" height="38.70" fill="#4AAE36"/>
<rect x="387.63" y="396.80" width="5.67" height="41.60" fill="#1A800E"/>
<rect x="388.63" y="397.70" width="4.17" height="40.70" fill="#4AAE36"/>
<rect x="392.90" y="398.90" width="5.67" height="39.50" fill="#1A800E"/>
<rect x="393.90" y="399.80" width="4.17" height="38.60" fill="#4AAE36"/>
<rect x="398.17" y="398.90" width="5.67" height="39.50" fill="#1A800E"/>
<rect x="399.17" y="399.80" width="4.17" height="38.60" fill="#4AAE36"/>
<rect x="403.44" y="396.20" width="5.67" height="42.20" fill="#1A800E"/>
<rect x="404.44" y="397.10" width="4.17" height="41.30" fill="#4AAE36"/>
<rect x="408.71" y="413.10" width="5.67" height="25.30" fill="#1A800E"/>
<rect x="409.71" y="414.00" width="4.17" height="24.40" fill="#4AAE36"/>
<rect x="413.98" y="423.80" width="5.67" height="14.60" fill="#1A800E"/>
<rect x="414.98" y="424.70" width="4.17" height="13.70" fill="#4AAE36"/>
<rect x="419.25" y="417.90" width="5.67" height="20.50" fill="#1A800E"/>
<rect x="420.25" y="418.80" width="4.17" height="19.60" fill="#4AAE36"/>
<rect x="424.52" y="417.90" width="5.67" height="20.50" fill="#1A800E"/>
<rect x="425.52" y="418.80" width="4.17" height="19.60" fill="#4AAE36"/>
<rect x="429.79" y="422.60" width="5.67" height="15.80" fill="#1A800E"/>
<rect x="430.79" y="423.50" width="4.17" height="14.90" fill="#4AAE36"/>
<rect x="435.06" y="422.00" width="5.67" height="16.40" fill="#1A800E"/>
<rect x="436.06" y="422.90" width="4.17" height="15.50" fill="#4AAE36"/>
<rect x="440.33" y="422.00" width="5.67" height="16.40" fill="#1A800E"/>
<rect x="441.33" y="422.90" width="4.17" height="15.50" fill="#4AAE36"/>
<rect x="445.60" y="423.00" width="5.67" height="15.40" fill="#1A800E"/>
<rect x="446.60" y="423.90" width="4.17" height="14.50" fill="#4AAE36"/>
<rect x="450.87" y="423.00" width="5.67" height="15.40" fill="#1A800E"/>
<rect x="451.87" y="423.90" width="4.17" height="14.50" fill="#4AAE36"/>
<rect x="456.14" y="428.30" width="5.67" height="10.10" fill="#1A800E"/>
<rect x="457.14" y="429.20" width="4.17" height="9.20" fill="#4AAE36"/>
<rect x="461.41" y="428.80" width="5.67" height="9.60" fill="#1A800E"/>
<rect x="462.41" y="429.70" width="4.17" height="8.70" fill="#4AAE36"/>
<rect x="466.68" y="422.80" width="5.67" height="15.60" fill="#1A800E"/>
<rect x="467.68" y="423.70" width="4.17" height="14.70" fill="#4AAE36"/>
<rect x="471.95" y="422.80" width="5.67" height="15.60" fill="#1A800E"/>
<rect x="472.95" y="423.70" width="4.17" height="14.70" fill="#4AAE36"/>
<rect x="477.22" y="422.80" width="5.67" height="15.60" fill="#1A800E"/>
<rect x="478.22" y="423.70" width="4.17" height="14.70" fill="#4AAE36"/>
<rect x="482.49" y="422.20" width="5.67" height="16.20" fill="#1A800E"/>
<rect x="483.49" y="423.10" width="4.17" height="15.30" fill="#4AAE36"/>
<rect x="487.76" y="432.60" width="5.67" height="5.80" fill="#1A800E"/>
<rect x="488.76" y="433.50" width="4.17" height="4.90" fill="#4AAE36"/>
<rect x="493.03" y="432.60" width="5.67" height="5.80" fill="#1A800E"/>
<rect x="494.03" y="433.50" width="4.17" height="4.90" fill="#4AAE36"/>
<rect x="498.30" y="423.10" width="5.67" height="15.30" fill="#1A800E"/>
<rect x="499.30" y="424.00" width="4.17" height="14.40" fill="#4AAE36"/>
<rect x="503.57" y="428.10" width="5.67" height="10.30" fill="#1A800E"/>
<rect x="504.57" y="429.00" width="4.17" height="9.40" fill="#4AAE36"/>
<rect x="508.84" y="432.60" width="5.67" height="5.80" fill="#1A800E"/>
<rect x="509.84" y="433.50" width="4.17" height="4.90" fill="#4AAE36"/>
<rect x="514.11" y="435.10" width="5.67" height="3.30" fill="#1A800E"/>
<rect x="515.11" y="436.00" width="4.17" height="2.40" fill="#4AAE36"/>
<rect x="519.38" y="432.80" width="5.67" height="5.60" fill="#1A800E"/>
<rect x="520.38" y="433.70" width="4.17" height="4.70" fill="#4AAE36"/>
<text x="350.80" y="263.63" font-size="6.2" fill="#111" textLength="35.00" lengthAdjust="spacingAndGlyphs" font-weight="bold" stroke="#111" stroke-width="0.1">Spectrogram</text>
<rect x="486.7" y="255" width="75.3" height="13.3" fill="#fff"/>
<line x1="486.7" y1="255.4" x2="562" y2="255.4" stroke="#555" stroke-width="0.8"/><line x1="487.1" y1="255" x2="487.1" y2="268.3" stroke="#555" stroke-width="0.8"/>
<line x1="486.7" y1="268" x2="562" y2="268" stroke="#E8E8E8" stroke-width="0.6"/><line x1="561.7" y1="255" x2="561.7" y2="268.3" stroke="#E8E8E8" stroke-width="0.6"/>
<text x="493.30" y="263.58" font-size="6.6" fill="#222" textLength="63.00" lengthAdjust="spacingAndGlyphs" font-weight="bold">01.08.2007 - 05:32</text>
<line x1="156.5" y1="250.5" x2="156.5" y2="438.9" stroke="#1E1C14" stroke-width="1.1"/>
<line x1="156.0" y1="438.4" x2="582.8" y2="438.4" stroke="#1E1C14" stroke-width="1.1"/>
<line x1="582.3" y1="250.5" x2="582.3" y2="438.9" stroke="#1E1C14" stroke-width="1.1"/>
<line x1="154.3" y1="251.30" x2="156.5" y2="251.30" stroke="#1E1C14" stroke-width="1"/>
<line x1="582.3" y1="251.30" x2="584.5" y2="251.30" stroke="#1E1C14" stroke-width="1"/>
<text x="150.90" y="253.32" font-size="5.6" fill="#1a1a1a" textLength="8.10" lengthAdjust="spacingAndGlyphs" font-weight="bold" text-anchor="end" stroke="#1a1a1a" stroke-width="0.15">0,9</text>
<text x="586.80" y="253.32" font-size="5.6" fill="#1a1a1a" textLength="8.30" lengthAdjust="spacingAndGlyphs" font-weight="bold" stroke="#1a1a1a" stroke-width="0.15">0,9</text>
<line x1="154.3" y1="272.09" x2="156.5" y2="272.09" stroke="#1E1C14" stroke-width="1"/>
<line x1="582.3" y1="272.09" x2="584.5" y2="272.09" stroke="#1E1C14" stroke-width="1"/>
<text x="150.90" y="274.10" font-size="5.6" fill="#1a1a1a" textLength="8.10" lengthAdjust="spacingAndGlyphs" font-weight="bold" text-anchor="end" stroke="#1a1a1a" stroke-width="0.15">0,8</text>
<text x="586.80" y="274.10" font-size="5.6" fill="#1a1a1a" textLength="8.30" lengthAdjust="spacingAndGlyphs" font-weight="bold" stroke="#1a1a1a" stroke-width="0.15">0,8</text>
<line x1="154.3" y1="292.88" x2="156.5" y2="292.88" stroke="#1E1C14" stroke-width="1"/>
<line x1="582.3" y1="292.88" x2="584.5" y2="292.88" stroke="#1E1C14" stroke-width="1"/>
<text x="150.90" y="294.89" font-size="5.6" fill="#1a1a1a" textLength="8.10" lengthAdjust="spacingAndGlyphs" font-weight="bold" text-anchor="end" stroke="#1a1a1a" stroke-width="0.15">0,7</text>
<text x="586.80" y="294.89" font-size="5.6" fill="#1a1a1a" textLength="8.30" lengthAdjust="spacingAndGlyphs" font-weight="bold" stroke="#1a1a1a" stroke-width="0.15">0,7</text>
<line x1="154.3" y1="313.67" x2="156.5" y2="313.67" stroke="#1E1C14" stroke-width="1"/>
<line x1="582.3" y1="313.67" x2="584.5" y2="313.67" stroke="#1E1C14" stroke-width="1"/>
<text x="150.90" y="315.68" font-size="5.6" fill="#1a1a1a" textLength="8.10" lengthAdjust="spacingAndGlyphs" font-weight="bold" text-anchor="end" stroke="#1a1a1a" stroke-width="0.15">0,6</text>
<text x="586.80" y="315.68" font-size="5.6" fill="#1a1a1a" textLength="8.30" lengthAdjust="spacingAndGlyphs" font-weight="bold" stroke="#1a1a1a" stroke-width="0.15">0,6</text>
<line x1="154.3" y1="334.46" x2="156.5" y2="334.46" stroke="#1E1C14" stroke-width="1"/>
<line x1="582.3" y1="334.46" x2="584.5" y2="334.46" stroke="#1E1C14" stroke-width="1"/>
<text x="150.90" y="336.47" font-size="5.6" fill="#1a1a1a" textLength="8.10" lengthAdjust="spacingAndGlyphs" font-weight="bold" text-anchor="end" stroke="#1a1a1a" stroke-width="0.15">0,5</text>
<text x="586.80" y="336.47" font-size="5.6" fill="#1a1a1a" textLength="8.30" lengthAdjust="spacingAndGlyphs" font-weight="bold" stroke="#1a1a1a" stroke-width="0.15">0,5</text>
<line x1="154.3" y1="355.24" x2="156.5" y2="355.24" stroke="#1E1C14" stroke-width="1"/>
<line x1="582.3" y1="355.24" x2="584.5" y2="355.24" stroke="#1E1C14" stroke-width="1"/>
<text x="150.90" y="357.26" font-size="5.6" fill="#1a1a1a" textLength="8.10" lengthAdjust="spacingAndGlyphs" font-weight="bold" text-anchor="end" stroke="#1a1a1a" stroke-width="0.15">0,4</text>
<text x="586.80" y="357.26" font-size="5.6" fill="#1a1a1a" textLength="8.30" lengthAdjust="spacingAndGlyphs" font-weight="bold" stroke="#1a1a1a" stroke-width="0.15">0,4</text>
<line x1="154.3" y1="376.03" x2="156.5" y2="376.03" stroke="#1E1C14" stroke-width="1"/>
<line x1="582.3" y1="376.03" x2="584.5" y2="376.03" stroke="#1E1C14" stroke-width="1"/>
<text x="150.90" y="378.05" font-size="5.6" fill="#1a1a1a" textLength="8.10" lengthAdjust="spacingAndGlyphs" font-weight="bold" text-anchor="end" stroke="#1a1a1a" stroke-width="0.15">0,3</text>
<text x="586.80" y="378.05" font-size="5.6" fill="#1a1a1a" textLength="8.30" lengthAdjust="spacingAndGlyphs" font-weight="bold" stroke="#1a1a1a" stroke-width="0.15">0,3</text>
<line x1="154.3" y1="396.82" x2="156.5" y2="396.82" stroke="#1E1C14" stroke-width="1"/>
<line x1="582.3" y1="396.82" x2="584.5" y2="396.82" stroke="#1E1C14" stroke-width="1"/>
<text x="150.90" y="398.84" font-size="5.6" fill="#1a1a1a" textLength="8.10" lengthAdjust="spacingAndGlyphs" font-weight="bold" text-anchor="end" stroke="#1a1a1a" stroke-width="0.15">0,2</text>
<text x="586.80" y="398.84" font-size="5.6" fill="#1a1a1a" textLength="8.30" lengthAdjust="spacingAndGlyphs" font-weight="bold" stroke="#1a1a1a" stroke-width="0.15">0,2</text>
<line x1="154.3" y1="417.61" x2="156.5" y2="417.61" stroke="#1E1C14" stroke-width="1"/>
<line x1="582.3" y1="417.61" x2="584.5" y2="417.61" stroke="#1E1C14" stroke-width="1"/>
<text x="150.90" y="419.63" font-size="5.6" fill="#1a1a1a" textLength="8.10" lengthAdjust="spacingAndGlyphs" font-weight="bold" text-anchor="end" stroke="#1a1a1a" stroke-width="0.15">0,1</text>
<text x="586.80" y="419.63" font-size="5.6" fill="#1a1a1a" textLength="8.30" lengthAdjust="spacingAndGlyphs" font-weight="bold" stroke="#1a1a1a" stroke-width="0.15">0,1</text>
<line x1="154.3" y1="438.40" x2="156.5" y2="438.40" stroke="#1E1C14" stroke-width="1"/>
<line x1="582.3" y1="438.40" x2="584.5" y2="438.40" stroke="#1E1C14" stroke-width="1"/>
<text x="150.90" y="440.42" font-size="5.6" fill="#1a1a1a" textLength="8.10" lengthAdjust="spacingAndGlyphs" font-weight="bold" text-anchor="end" stroke="#1a1a1a" stroke-width="0.15">0,0</text>
<text x="586.80" y="440.42" font-size="5.6" fill="#1a1a1a" textLength="8.30" lengthAdjust="spacingAndGlyphs" font-weight="bold" stroke="#1a1a1a" stroke-width="0.15">0,0</text>
<line x1="156.3" y1="438.4" x2="156.3" y2="440.9" stroke="#1E1C14" stroke-width="1"/>
<text x="156.30" y="447.02" font-size="5.6" fill="#1a1a1a" textLength="10.20" lengthAdjust="spacingAndGlyphs" font-weight="bold" text-anchor="middle" stroke="#1a1a1a" stroke-width="0.15">0,01</text>
<line x1="228.3" y1="438.4" x2="228.3" y2="440.9" stroke="#1E1C14" stroke-width="1"/>
<text x="228.30" y="447.02" font-size="5.6" fill="#1a1a1a" textLength="10.00" lengthAdjust="spacingAndGlyphs" font-weight="bold" text-anchor="middle" stroke="#1a1a1a" stroke-width="0.15">0,05</text>
<line x1="261.3" y1="438.4" x2="261.3" y2="440.9" stroke="#1E1C14" stroke-width="1"/>
<text x="261.30" y="447.02" font-size="5.6" fill="#1a1a1a" textLength="8.00" lengthAdjust="spacingAndGlyphs" font-weight="bold" text-anchor="middle" stroke="#1a1a1a" stroke-width="0.15">0,1</text>
<line x1="333.5" y1="438.4" x2="333.5" y2="440.9" stroke="#1E1C14" stroke-width="1"/>
<text x="333.50" y="447.02" font-size="5.6" fill="#1a1a1a" textLength="8.00" lengthAdjust="spacingAndGlyphs" font-weight="bold" text-anchor="middle" stroke="#1a1a1a" stroke-width="0.15">0,5</text>
<line x1="366.5" y1="438.4" x2="366.5" y2="440.9" stroke="#1E1C14" stroke-width="1"/>
<text x="366.50" y="447.02" font-size="5.6" fill="#1a1a1a" font-weight="bold" text-anchor="middle" stroke="#1a1a1a" stroke-width="0.15">1</text>
<line x1="439.2" y1="438.4" x2="439.2" y2="440.9" stroke="#1E1C14" stroke-width="1"/>
<text x="439.20" y="447.02" font-size="5.6" fill="#1a1a1a" font-weight="bold" text-anchor="middle" stroke="#1a1a1a" stroke-width="0.15">5</text>
<line x1="471.6" y1="438.4" x2="471.6" y2="440.9" stroke="#1E1C14" stroke-width="1"/>
<text x="471.60" y="447.02" font-size="5.6" fill="#1a1a1a" font-weight="bold" text-anchor="middle" stroke="#1a1a1a" stroke-width="0.15">10</text>
<line x1="544.5" y1="438.4" x2="544.5" y2="440.9" stroke="#1E1C14" stroke-width="1"/>
<text x="544.50" y="447.02" font-size="5.6" fill="#1a1a1a" font-weight="bold" text-anchor="middle" stroke="#1a1a1a" stroke-width="0.15">50</text>
<line x1="577.5" y1="438.4" x2="577.5" y2="440.9" stroke="#1E1C14" stroke-width="1"/>
<text x="577.50" y="447.02" font-size="5.6" fill="#1a1a1a" font-weight="bold" text-anchor="middle" stroke="#1a1a1a" stroke-width="0.15">100</text>
<text x="369.00" y="456.80" font-size="6.4" fill="#1a1a1a" font-weight="bold" text-anchor="middle" stroke="#1a1a1a" stroke-width="0.15">[m]</text>
<rect x="546" y="451" width="7" height="7" fill="#5EB85A" stroke="#2F6A28" stroke-width="0.7"/>
<text x="555.00" y="456.51" font-size="5.3" fill="#222" textLength="30.00" lengthAdjust="spacingAndGlyphs">Spectrogram1</text>
<text x="452" y="445" font-size="15" font-weight="bold" font-style="italic" fill="#FFFFFF" fill-opacity="0.22" textLength="108" lengthAdjust="spacingAndGlyphs">TNCSN.COM</text>
<g transform="translate(466,449.5) skewX(-10) scale(0.98,1)" fill="none" stroke="#FFFFFF" stroke-opacity="0.34" stroke-width="2.3" stroke-linecap="round" stroke-linejoin="round"><path transform="translate(0.0,0)" d="M3 4 H13 V11 H3 Z M8 0.5 V17.5"/><path transform="translate(15.3,0)" d="M1.5 1.5 H14.5 V17 H1.5 Z M4.5 5 H11.5 M4.5 9 H11.5 M4.5 13.5 H11.5 M8 5 V13.5 M10.5 10.5 L12 12"/><path transform="translate(30.6,0)" d="M4.5 1 L1.5 7 H6 L1.5 13 L7 12 M1.5 16.5 L7 15 M11.5 0.5 V3 M8 4 H15.5 M10 4 Q10 13 7.5 17.5 M10 8.5 H14 V15.5 L12 17"/><path transform="translate(45.9,0)" d="M4.5 1 L1.5 7 H6 L1.5 13 L7 12 M1.5 16.5 L7 15 M9 2 H15 V9 H9 Z M10.5 12 L8.5 17 M13 12 L15.5 17"/><path transform="translate(61.2,0)" d="M1.5 17.5 V1.5 H14.5 V16.5 L12.5 17.5 M4 5 L7 12 M7 5 L4 12 M9 5 L12 12 M12 5 L9 12"/></g>
</svg></body></html>
